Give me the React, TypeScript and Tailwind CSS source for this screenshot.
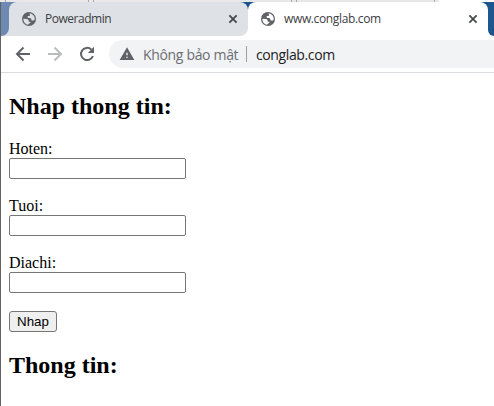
import { MdWarning } from "react-icons/md";

function Globe({ land }: { land: string }) {
  return (
    <svg viewBox="0 0 42 42" className="size-3.5 shrink-0">
      <circle cx="21" cy="21" r="21" fill="#5f6368" />
      <path
        d="M23 4 C30 5 36 10 38 18 L38 23 C36 26 32 26 28 25 L28 21 L25 18 L19 18 L17 16 L17 12 L23 12 L24 8 L23 7 Z M4 20 L16 21 L20 25 L20 29 L25 29 L25 33 L20 35 L19 38 C10 37 4 30 4 20 Z"
        fill={land}
      />
    </svg>
  );
}

function Close() {
  return (
    <svg viewBox="0 0 14 14" className="size-3.5 shrink-0">
      <path d="M3.4 3.400 L10.6 10.600 M10.6 3.400 L3.4 10.600" stroke="#45484c" strokeWidth="1.8" fill="none" />
    </svg>
  );
}

function Arrow({ forward = false }: { forward?: boolean }) {
  return (
    <svg
      viewBox="0 0 22 22"
      className={forward ? "ml-[10px] size-[22px] rotate-180 text-[#babcbe]" : "size-[22px] text-[#5f6368]"}
    >
      <path d="M18 11 H5.500 M11.500 4.500 L5 11 L11.500 17.500" stroke="currentColor" strokeWidth="2" fill="none" />
    </svg>
  );
}

function Reload() {
  return (
    <svg viewBox="0 0 22 22" className="ml-[10px] size-[22px] text-[#5f6368]">
      <path d="M15.400 6.600 A6.100 6.100 0 1 0 16.900 13" stroke="currentColor" strokeWidth="2" fill="none" />
      <path d="M18 3.800 V10 H11.800 Z" fill="currentColor" />
    </svg>
  );
}

interface TabProps {
  title: string;
  active?: boolean;
}

function Tab({ title, active = false }: TabProps) {
  return (
    <div
      className={
        active
          ? "flex h-[34px] w-[240px] items-center rounded-t-lg bg-white pl-[13px] pr-2"
          : "flex h-[34px] w-[239px] items-center rounded-t-lg rounded-br-lg bg-[#dee1e6] pl-[13px] pr-2"
      }
    >
      <Globe land={active ? "#ffffff" : "#dee1e6"} />
      <span
        className={
          active
            ? "ml-[9px] flex-1 font-['Open_Sans','Noto_Sans',sans-serif] text-[12px] leading-4 tracking-[-0.36px] text-[#3c4043]"
            : "ml-[9px] flex-1 font-['Open_Sans','Noto_Sans',sans-serif] text-[12px] leading-4 tracking-[-0.48px] text-[#3c4043]"
        }
      >
        {title}
      </span>
      <Close />
    </div>
  );
}

function Field({ label }: { label: string }) {
  return (
    <div className="mb-[18px]">
      <label className="block text-base leading-[18px]">
        {label}
        <input className="block h-[21px] w-[177px] rounded-[2px] border border-[#767676] bg-white" />
      </label>
    </div>
  );
}

export default function App() {
  return (
    <div className="flex h-[406px] w-[494px] flex-col overflow-hidden bg-white">
      <div className="flex h-0.5 shrink-0 bg-[#e8e8e8]">
        <div className="w-[6px] border-r border-[#aaa]" />
        <div className="w-[83px] border-r border-[#aaa]" />
        <div className="w-[5px] border-r border-[#aaa]" />
        <div className="w-[198px] border-r border-[#aaa]" />
        <div className="w-[5px] border-r border-[#aaa]" />
        <div className="w-[138px] border-r border-[#aaa]" />
        <div className="w-1" />
        <div className="flex-1 bg-white" />
      </div>
      <div className="flex min-h-0 flex-1 flex-col border-l border-[#606164]">
        <div className="flex h-[34px] shrink-0 bg-white">
          <div className="flex w-[247px] bg-gradient-to-r from-[#6d8ab3] from-5% to-[#1b5189] to-90%">
            <div className="w-2 bg-[#dee1e6]">
              <div className="h-full rounded-br-lg bg-[#6d8ab3]" />
            </div>
            <div className="bg-[linear-gradient(to_bottom,transparent_50%,white_50%)]">
              <Tab title="Poweradmin" />
            </div>
          </div>
          <div className="bg-[linear-gradient(to_bottom,#1b5189_50%,white_50%)]">
            <Tab title="www.conglab.com" active />
          </div>
          <div className="h-full flex-1 rounded-bl-lg bg-[#1e568f]" />
        </div>
        <div className="flex h-[37px] shrink-0 items-center border-b border-[#dadce0] bg-white pl-[11px]">
          <Arrow />
          <Arrow forward />
          <Reload />
          <div className="ml-[11px] flex h-7 flex-1 items-center rounded-l-full bg-[#f1f3f4] pl-[10px] font-['Open_Sans','Noto_Sans',sans-serif] text-[14px]">
            <MdWarning className="size-4 text-[#5f6368]" />
            <span className="ml-2 w-[96px] whitespace-nowrap tracking-[-0.33px] text-[#6b6e73]">Không bảo mật</span>
            <span className="ml-[7px] h-4 w-px bg-[#9aa0a6]" />
            <span className="ml-[9px] tracking-[-0.38px] text-[#202124]">conglab.com</span>
          </div>
        </div>
        <main className="px-2 pt-5 font-['Liberation_Serif','Times_New_Roman',serif] text-black">
          <h2 className="mb-5 text-2xl leading-[27px] font-bold">Nhap thong tin:</h2>
          <Field label="Hoten:" />
          <Field label="Tuoi:" />
          <Field label="Diachi:" />
          <button className="block h-[21px] w-12 rounded-[3px] border border-[#767676] bg-[#efefef] font-['Liberation_Sans',Arial,sans-serif] text-[13.333px] leading-[19px]">
            Nhap
          </button>
          <h2 className="mt-5 text-2xl leading-[27px] font-bold">Thong tin:</h2>
        </main>
      </div>
    </div>
  );
}
